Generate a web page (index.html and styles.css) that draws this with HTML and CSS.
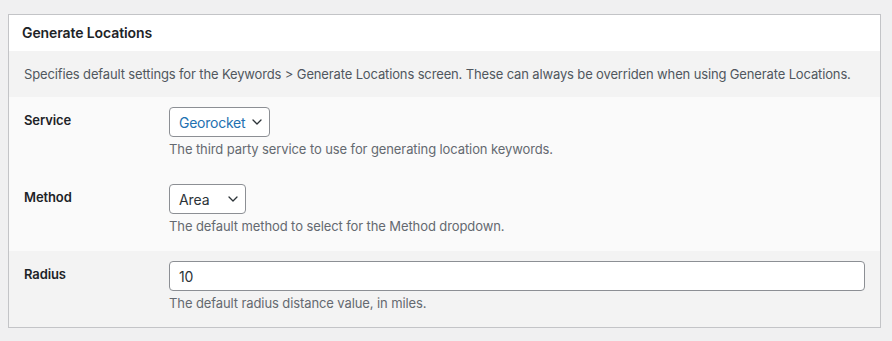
FILE: index.html
```html
<!DOCTYPE html>
<html lang="en">
<head>
<meta charset="utf-8">
<title>Generate Locations</title>
<link rel="stylesheet" href="styles.css">
</head>
<body>
<div class="postbox">
  <div class="postbox-header"><h2 class="postbox-title">Generate Locations</h2></div>
  <div class="postbox-intro">Specifies default settings for the Keywords &gt; Generate Locations screen. These can always be overriden when using Generate Locations.</div>
  <div class="field-group field-group-light">
    <div class="field-row">
      <div class="field-label">Service</div>
      <div class="field-control">
        <div class="select select-service">
          <span class="select-value">Georocket</span>
          <svg class="chevron" width="10" height="6" viewBox="0 0 10 6"><polyline points="1,1 5,5 9,1" fill="none" stroke="#2c3338" stroke-width="1.3" stroke-linecap="round" stroke-linejoin="round"/></svg>
        </div>
        <p class="field-desc">The third party service to use for generating location keywords.</p>
      </div>
    </div>
    <div class="field-row">
      <div class="field-label">Method</div>
      <div class="field-control">
        <div class="select select-method">
          <span class="select-value">Area</span>
          <svg class="chevron" width="10" height="6" viewBox="0 0 10 6"><polyline points="1,1 5,5 9,1" fill="none" stroke="#2c3338" stroke-width="1.3" stroke-linecap="round" stroke-linejoin="round"/></svg>
        </div>
        <p class="field-desc">The default method to select for the Method dropdown.</p>
      </div>
    </div>
  </div>
  <div class="field-group field-group-dark">
    <div class="field-row field-row-last">
      <div class="field-label">Radius</div>
      <div class="field-control">
        <div class="text-input">10</div>
        <p class="field-desc">The default radius distance value, in miles.</p>
      </div>
    </div>
  </div>
</div>
</body>
</html>
```

FILE: styles.css
```css
html, body {
  margin: 0;
  padding: 0;
}
body {
  background: #f0f0f1;
  font-family: Inter, "Noto Sans", "Liberation Sans", sans-serif;
  color: #1d2327;
  padding: 14px 11px 0 8px;
  letter-spacing: -0.1px;
}
.postbox {
  border: 1px solid #c3c4c7;
  background: #fff;
}
.postbox-header {
  height: 36px;
  display: flex;
  align-items: center;
  padding: 0 13px;
}
.postbox-title {
  margin: 0;
  font-size: 14px;
  font-weight: 600;
  line-height: 20px;
  color: #1d2327;
}
.postbox-intro {
  background: #f3f3f3;
  height: 46px;
  display: flex;
  align-items: center;
  padding: 0 15px;
  font-size: 13px;
  color: #50575e;
  white-space: nowrap;
  letter-spacing: -0.14px;
}
.field-group-light {
  background: #fafafa;
}
.field-group-dark {
  background: #f3f3f3;
}
.field-row {
  display: grid;
  grid-template-columns: 145px 1fr;
  padding: 10px 15px 17px 15px;
}
.field-row-last {
  padding-bottom: 16px;
}
.field-label {
  padding-top: 3px;
  font-size: 13px;
  font-weight: 600;
  line-height: 20px;
  color: #1d2327;
}
.field-control {
  display: flex;
  flex-direction: column;
  align-items: flex-start;
}
.select {
  box-sizing: border-box;
  height: 30px;
  border: 1px solid #8c8f94;
  border-radius: 4px;
  background: #fff;
  display: flex;
  align-items: center;
  justify-content: space-between;
  padding: 0 7px 0 9px;
  font-size: 14px;
  color: #2c3338;
}
.select-service {
  width: 101px;
  color: #2271b1;
  letter-spacing: -0.25px;
}
.select-method {
  width: 77px;
}
.chevron {
  display: block;
  flex: none;
}
.text-input {
  box-sizing: border-box;
  width: 100%;
  height: 30px;
  border: 1px solid #8c8f94;
  border-radius: 4px;
  background: #fff;
  display: flex;
  align-items: center;
  padding: 0 9px;
  font-size: 14px;
  color: #2c3338;
}
.field-desc {
  margin: 4px 0 0 0;
  font-size: 13px;
  line-height: 16px;
  color: #646970;
}
```
